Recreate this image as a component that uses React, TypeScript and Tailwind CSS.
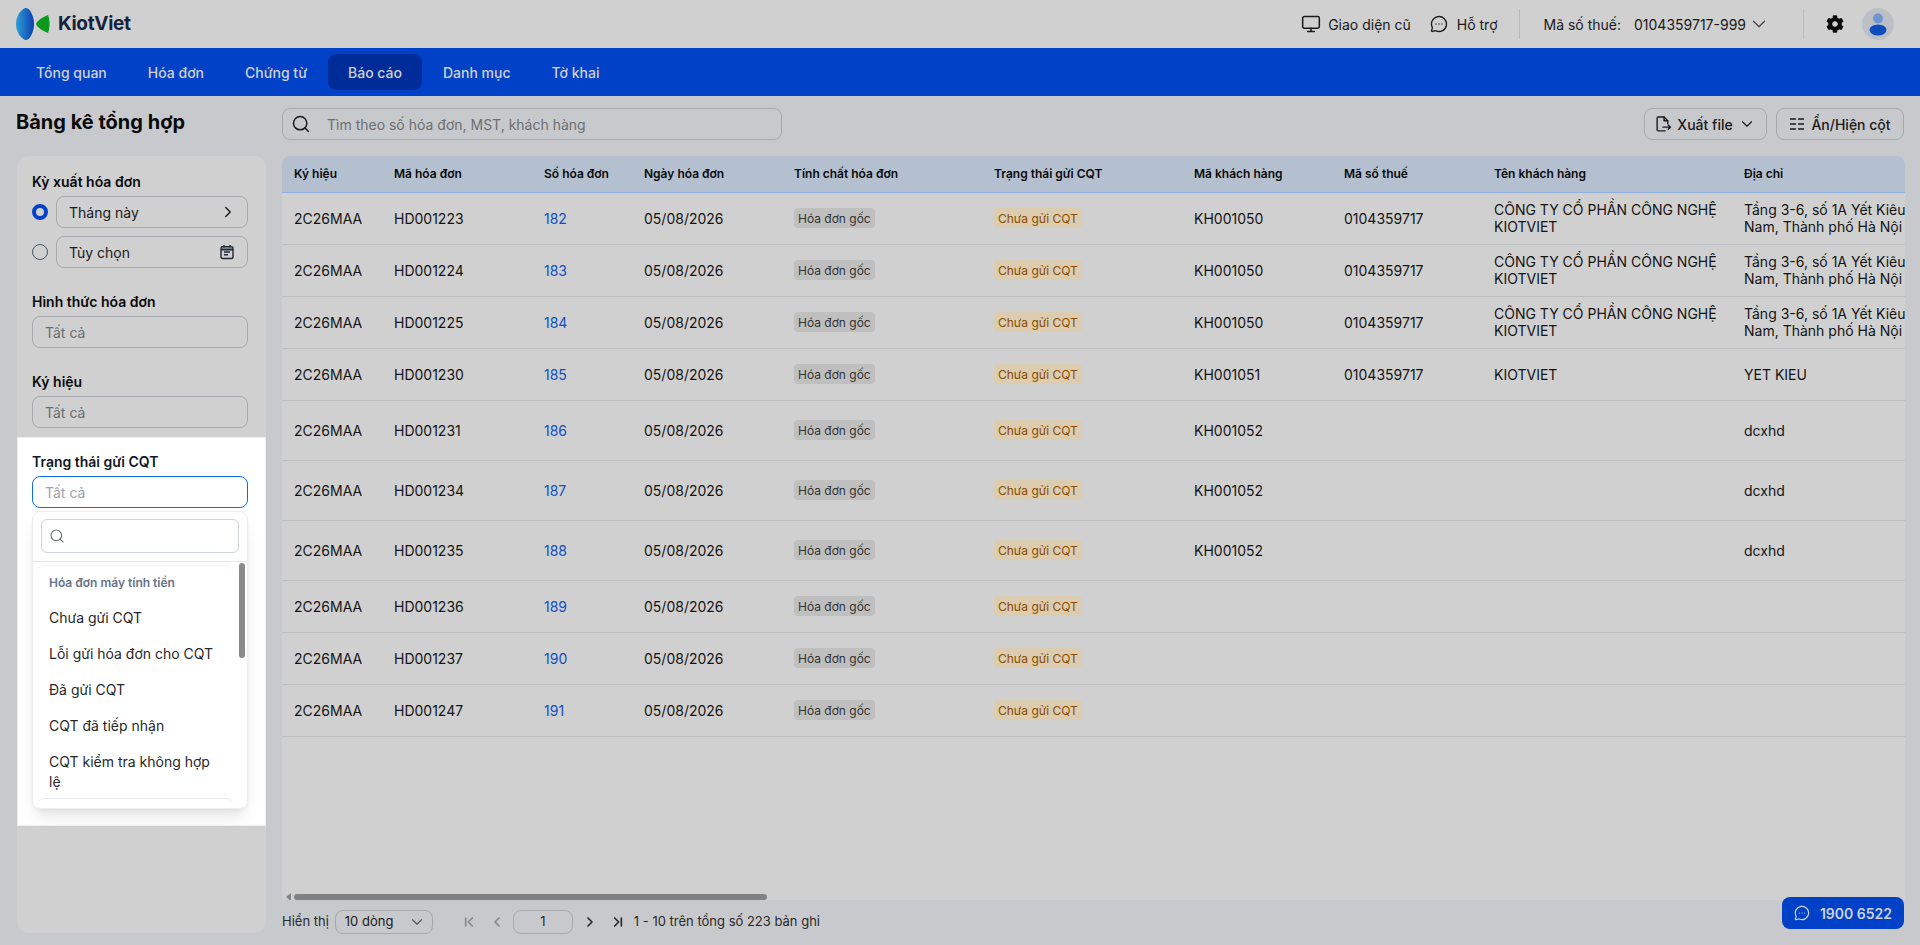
import React from "react";
import { Search, Monitor, MessageCircleMore, ChevronDown, ChevronRight, ChevronLeft, ChevronFirst, ChevronLast } from "lucide-react";
import { FaCog } from "react-icons/fa";

const font = { fontFamily: "Inter, 'Noto Sans', sans-serif" };

const columns = [
  ["Ký hiệu", 100], ["Mã hóa đơn", 150], ["Số hóa đơn", 100], ["Ngày hóa đơn", 150], ["Tính chất hóa đơn", 200],
  ["Trạng thái gửi CQT", 200], ["Mã khách hàng", 150], ["Mã số thuế", 150], ["Tên khách hàng", 250], ["Địa chỉ", 290],
] as const;

const company = "CÔNG TY CỔ PHẦN CÔNG NGHỆ KIOTVIET";
const addr = "Tầng 3-6, số 1A Yết Kiêu, Phường Cửa Nam, Thành phố Hà Nội";

const rows = [
  ["HD001223", "182", "KH001050", "0104359717", company, addr, "h-[52px]"],
  ["HD001224", "183", "KH001050", "0104359717", company, addr, "h-[52px]"],
  ["HD001225", "184", "KH001050", "0104359717", company, addr, "h-[52px]"],
  ["HD001230", "185", "KH001051", "0104359717", "KIOTVIET", "YET KIEU", "h-[52px]"],
  ["HD001231", "186", "KH001052", "", "", "dcxhd", "h-[60px]"],
  ["HD001234", "187", "KH001052", "", "", "dcxhd", "h-[60px]"],
  ["HD001235", "188", "KH001052", "", "", "dcxhd", "h-[60px]"],
  ["HD001236", "189", "", "", "", "", "h-[52px]"],
  ["HD001237", "190", "", "", "", "", "h-[52px]"],
  ["HD001247", "191", "", "", "", "", "h-[52px]"],
];

function Logo() {
  return (
    <svg width="34" height="32" viewBox="0 0 34 32" className="shrink-0">
      <defs>
        <linearGradient id="kvb" x1="0" y1="0" x2="1" y2="0">
          <stop offset="0" stopColor="#2f9fd6" />
          <stop offset="1" stopColor="#0b3fb0" />
        </linearGradient>
      </defs>
      <path d="M9 0C3.500 3 0 9 0 16s3.500 13 9 16c1.500 0 3.500-.5 5-2.500 2.500-3.500 4-8.500 4-13.500S16.500 6 14 2.500C12.500 .5 10.500 0 9 0z" fill="url(#kvb)" />
      <path d="M32 7c-5 2-10.500 5-12 9 1.500 4 7 7 12 9 .8-2 1.500-5 1.500-9s-.7-7-1.500-9z" fill="#0b9a1e" />
    </svg>
  );
}

function Label({ children }: { children: React.ReactNode }) {
  return <div className="text-[14px] leading-[20px] font-semibold text-[#0a0a0a] mb-[4px]">{children}</div>;
}

function Dim({ text = "Tất cả" }: { text?: string }) {
  return (
    <div className="h-[32px] rounded-lg border border-[#a6a9ad] px-[12px] flex items-center text-[14px] text-[#6c6f73]">{text}</div>
  );
}

function Radio({ on }: { on?: boolean }) {
  return on ? (
    <span className="w-[16px] h-[16px] rounded-full border-[4px] border-[#0041c7] bg-[#d0d0d0] shrink-0" />
  ) : (
    <span className="w-[16px] h-[16px] rounded-full border border-[#4a5568] shrink-0" />
  );
}

function CalendarIcon() {
  return (
    <svg width="16" height="16" viewBox="0 0 16 16" fill="none" stroke="#1f2937" strokeWidth="1.400">
      <rect x="2" y="2.700" width="12" height="11.800" rx="1.500" />
      <path d="M2 5.500h12" strokeWidth="2" />
      <path d="M5 1v2.500M11 1v2.500" />
      <path d="M5 8h6M5 10.800h4" />
    </svg>
  );
}

function ExportIcon() {
  return (
    <svg width="17" height="17" viewBox="0 0 16 16" fill="none" stroke="#1a1a1a" strokeWidth="1.300" strokeLinejoin="round" strokeLinecap="round">
      <path d="M9.500 14H3a1 1 0 0 1-1-1V2a1 1 0 0 1 1-1h5.500L12 4.500V7" />
      <path d="M8.500 1v3.500H12" />
      <path d="M7.500 10.500h7M12.500 8.500l2 2-2 2" />
    </svg>
  );
}

function ColumnsIcon() {
  return (
    <svg width="16" height="16" viewBox="0 0 16 16" fill="none" stroke="#1a1a1a" strokeWidth="1.300">
      <path d="M1 3h6M1 8h6M1 13h6M9 3h6M9 8h6M9 13h6" />
    </svg>
  );
}

function Avatar() {
  return (
    <div className="w-[32px] h-[32px] rounded-full bg-[#bcc0c6] flex items-center justify-center shrink-0">
      <svg width="18" height="24" viewBox="0 0 18 24">
        <circle cx="9" cy="6.500" r="5" fill="#6f95cf" />
        <ellipse cx="9" cy="18" rx="8.500" ry="5.500" fill="#0f4cc0" />
      </svg>
    </div>
  );
}

export default function App() {
  return (
    <div style={font} className="w-[1920px] h-[945px] overflow-hidden bg-[#c8c9cc] flex flex-col text-[#111] relative">
      <header className="h-[48px] bg-[#d0d0d0] flex items-center pl-[16px] shrink-0">
        <Logo />
        <span className="ml-[8px] text-[19px] font-bold text-[#16233f] tracking-[-0.3px]">KiotViet</span>
        <div className="ml-auto flex items-center text-[14px] text-[#1a1a1a]">
          <Monitor size={20} strokeWidth={1.800} className="mr-[7px]" />
          <span>Giao diện cũ</span>
          <MessageCircleMore size={18} strokeWidth={1.800} className="ml-[19px] mr-[9px]" />
          <span>Hỗ trợ</span>
          <span className="w-px h-[30px] bg-[#b9babc] ml-[21px] mr-[24px]" />
          <span>Mã số thuế:</span>
          <span className="ml-[13px]">0104359717-999</span>
          <ChevronDown size={22} strokeWidth={1.300} className="ml-[2px] text-[#444]" />
          <span className="w-px h-[30px] bg-[#b9babc] ml-[33px] mr-[22px]" />
          <FaCog size={18} className="text-[#0a0a0a]" />
          <span className="w-[18px]" />
          <Avatar />
          <span className="w-[26px]" />
        </div>
      </header>

      <nav className="h-[48px] bg-[#0041c7] flex items-center gap-[1px] pl-[16px] shrink-0 text-[14px] font-medium text-[#d0d0d0]">
        {["Tổng quan", "Hóa đơn", "Chứng từ", "Báo cáo", "Danh mục", "Tờ khai"].map((t) => (
          <span key={t} className={`h-[36px] px-[20px] flex items-center rounded-lg ${t === "Báo cáo" ? "bg-[#002c99]" : ""}`}>{t}</span>
        ))}
      </nav>

      <div className="flex-1 min-h-0 flex pl-[17px] pr-[15px] gap-[16px]">
        <aside className="w-[249px] shrink-0 flex flex-col pb-[12px]">
          <div className="h-[60px] flex items-center -ml-[1px] shrink-0 pb-[8px] text-[20px] font-bold text-[#0a0a0a] whitespace-nowrap">Bảng kê tổng hợp</div>
          <div className="flex-1 rounded-xl bg-[#d0d0d0] pt-[16px]">
            <div className="pl-[15px] pr-[18px]">
              <Label>Kỳ xuất hóa đơn</Label>
              <div className="flex items-center gap-[8px] h-[32px]">
                <Radio on />
                <div className="flex-1 h-[32px] rounded-lg border border-[#a6a9ad] pl-[12px] pr-[10px] flex items-center justify-between text-[14px] text-[#1a1a1a]">
                  Tháng này <ChevronRight size={18} strokeWidth={1.800} />
                </div>
              </div>
              <div className="flex items-center gap-[8px] h-[32px] mt-[8px]">
                <Radio />
                <div className="flex-1 h-[32px] rounded-lg border border-[#a6a9ad] pl-[12px] pr-[12px] flex items-center justify-between text-[14px] text-[#1a1a1a]">
                  Tùy chọn <CalendarIcon />
                </div>
              </div>
              <div className="mt-[24px]"><Label>Hình thức hóa đơn</Label><Dim /></div>
              <div className="mt-[24px]"><Label>Ký hiệu</Label><Dim /></div>
            </div>
            <div className="mt-[9px] h-[389px] bg-white border border-[#eceef0] pl-[14px] pr-[17px] pt-[14px]">
              <div className="text-[14px] leading-[20px] font-semibold text-[#111827] mb-[4px]">Trạng thái gửi CQT</div>
              <div className="h-[32px] rounded-lg border border-[#0d6ee8] px-[12px] flex items-center text-[14px] text-[#9ca3af]">Tất cả</div>
              <div className="relative mt-[3px] h-[298px] rounded-lg bg-white border border-[#eceef1] shadow-lg overflow-hidden">
                <div className="px-[8px] pt-[7px] pb-[8px] border-b border-[#e5e7eb]">
                  <div className="h-[34px] rounded-md border border-[#cfd3da] flex items-center pl-[7px]">
                    <Search size={16} strokeWidth={1.700} className="text-[#6b7280]" />
                  </div>
                </div>
                <div className="ml-[4px] mt-[3px] mr-[14px] rounded-t-lg border-t border-[#eef0f2]">
                  <div className="px-[12px] pt-[8px] h-[34px] text-[12px] leading-[18px] font-semibold text-[#64748b]">Hóa đơn máy tính tiền</div>
                  {["Chưa gửi CQT", "Lỗi gửi hóa đơn cho CQT", "Đã gửi CQT", "CQT đã tiếp nhận"].map((t) => (
                    <div key={t} className="h-[36px] px-[12px] flex items-center text-[14px] leading-[20px] text-[#27272a]">{t}</div>
                  ))}
                  <div className="px-[12px] pt-[8px] pb-[6px] text-[14px] leading-[20px] text-[#27272a]">CQT kiểm tra không hợp lệ</div>
                </div>
                <div className="ml-[4px] mr-[14px] h-[12px] rounded-t-lg border-t border-[#e8eaed]" />
                <div className="absolute right-[2px] top-[51px] w-[6px] h-[95px] rounded-full bg-[#8a8a8a]" />
              </div>
            </div>
          </div>
        </aside>

        <main className="flex-1 min-w-0 flex flex-col pb-[2px]">
          <div className="h-[60px] shrink-0 flex items-start pt-[12px] pr-[1px]">
            <div className="w-[500px] h-[32px] rounded-lg border border-[#a6a9ad] flex items-center pl-[8px] text-[14px] text-[#6c6f73]">
              <Search size={20} strokeWidth={1.800} className="text-[#1a1a1a] mr-[16px]" />
              Tìm theo số hóa đơn, MST, khách hàng
            </div>
            <div className="ml-auto w-[123px] h-[32px] rounded-lg border border-[#a6a9ad] flex items-center justify-center text-[14px] font-medium text-[#1a1a1a]">
              <ExportIcon />
              <span className="ml-[5px] mr-[5px]">Xuất file</span>
              <ChevronDown size={18} strokeWidth={1.500} />
            </div>
            <div className="ml-[9px] w-[128px] h-[32px] rounded-lg border border-[#a6a9ad] flex items-center justify-center gap-[6px] text-[14px] font-medium text-[#1a1a1a]">
              <ColumnsIcon />
              Ẩn/Hiện cột
            </div>
          </div>

          <div className="h-[744px] shrink-0 bg-[#d0d0d0] rounded-t-lg overflow-hidden flex flex-col">
            <div className="flex-1 min-h-0 overflow-hidden">
              <table className="table-fixed border-collapse w-[1740px] text-left">
                <colgroup>
                  {columns.map(([n, w]) => <col key={n} style={{ width: w }} />)}
                </colgroup>
                <thead>
                  <tr className="h-[36px] bg-[#b4c0cf] border-b border-[#8fafdc]">
                    {columns.map(([n]) => (
                      <th key={n} className="px-[12px] text-[12px] font-semibold text-[#0a0a0a] whitespace-nowrap">{n}</th>
                    ))}
                  </tr>
                </thead>
                <tbody className="text-[14px] leading-[17px] text-[#141414]">
                  {rows.map((r) => (
                    <tr key={r[0]} className={`${r[6]} border-b border-[#bcbdc0]`}>
                      <td className="px-[12px]">2C26MAA</td>
                      <td className="px-[12px]">{r[0]}</td>
                      <td className="px-[12px] text-[#0f4ec5]">{r[1]}</td>
                      <td className="px-[12px]">05/08/2026</td>
                      <td className="px-[12px]">
                        <span className="inline-flex items-center h-[20px] px-[4px] rounded bg-[#bfbfbf] text-[12px] text-[#333333]">Hóa đơn gốc</span>
                      </td>
                      <td className="px-[12px]">
                        <span className="inline-flex items-center h-[20px] px-[4px] rounded bg-[#dccdb0] text-[12px] text-[#8a4b00]">Chưa gửi CQT</span>
                      </td>
                      <td className="px-[12px]">{r[2]}</td>
                      <td className="px-[12px]">{r[3]}</td>
                      <td className="px-[12px]">{r[4]}</td>
                      <td className="px-[12px]">{r[5]}</td>
                    </tr>
                  ))}
                </tbody>
              </table>
            </div>
            <div className="h-[7px] shrink-0 flex items-center">
              <span className="ml-[4px] w-0 h-0 border-y-[4px] border-y-transparent border-r-[5px] border-r-[#808184]" />
              <span className="ml-[3px] w-[473px] h-[6px] rounded-full bg-[#808184]" />
            </div>
          </div>

          <div className="flex-1 flex items-center text-[13px] text-[#2a2a2a]">
            <span>Hiển thị</span>
            <div className="ml-[6px] w-[98px] h-[24px] rounded-lg border border-[#a6a9ad] flex items-center justify-between pl-[9px] pr-[6px] text-[13px] text-[#1a1a1a]">
              10 dòng <ChevronDown size={18} strokeWidth={1.500} className="text-[#555]" />
            </div>
            <ChevronFirst size={16} strokeWidth={2.500} className="ml-[28px] text-[#85888c]" />
            <ChevronLeft size={16} strokeWidth={2.500} className="ml-[12px] text-[#85888c]" />
            <div className="ml-[8px] w-[60px] h-[24px] rounded-lg border border-[#a6a9ad] flex items-center justify-center text-[13px]">1</div>
            <ChevronRight size={16} strokeWidth={2.500} className="ml-[9px] text-[#2a2a2a]" />
            <ChevronLast size={16} strokeWidth={2.500} className="ml-[12px] text-[#2a2a2a]" />
            <span className="ml-[8px]">1 - 10 trên tổng số 223 bản ghi</span>
          </div>
        </main>
      </div>

      <div className="absolute left-[1782px] top-[897px] w-[122px] h-[32px] rounded-lg bg-[#0041c7] flex items-center justify-center gap-[10px] text-[14px] font-semibold text-[#cfd3da]">
        <MessageCircleMore size={16} strokeWidth={1.800} />
        1900 6522
      </div>
    </div>
  );
}
